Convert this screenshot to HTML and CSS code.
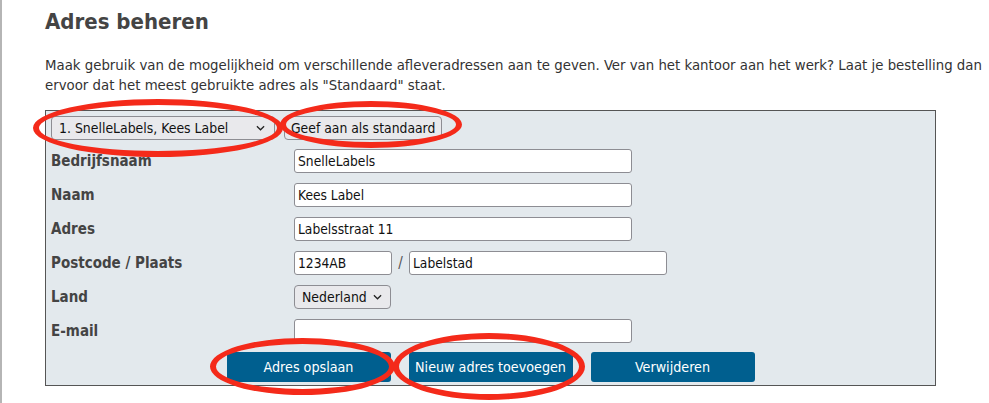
FILE: index.html
```html
<!DOCTYPE html>
<html lang="nl">

<head>
    <meta charset="UTF-8">
    <meta name="viewport" content="width=device-width, initial-scale=1.0">
    <title>Adres beheren</title>
    <link rel="stylesheet" href="styles.css">
</head>

<body>
    <div class="page">
        <h1 class="title">Adres beheren</h1>
        <p class="intro">Maak gebruik van de mogelijkheid om verschillende afleveradressen aan te geven. Ver van het kantoor aan het werk? Laat je bestelling dan ervoor dat het meest gebruikte adres als "Standaard" staat.</p>

        <div class="panel">
            <div class="panel-top">
                <div class="select select-address">
                    <span>1. SnelleLabels, Kees Label</span>
                    <svg class="chevron" viewBox="0 0 10 6" width="9" height="6"><path d="M1 1l4 4 4-4" fill="none" stroke="#222" stroke-width="1.4"/></svg>
                </div>
                <button class="btn-plain">Geef aan als standaard</button>
            </div>

            <div class="form">
                <label>Bedrijfsnaam</label>
                <div class="field"><input class="input" type="text" value="SnelleLabels"></div>

                <label>Naam</label>
                <div class="field"><input class="input" type="text" value="Kees Label"></div>

                <label>Adres</label>
                <div class="field"><input class="input" type="text" value="Labelsstraat 11"></div>

                <label>Postcode / Plaats</label>
                <div class="field">
                    <input class="input input-postcode" type="text" value="1234AB">
                    <span class="slash">/</span>
                    <input class="input input-city" type="text" value="Labelstad">
                </div>

                <label>Land</label>
                <div class="field">
                    <div class="select select-country">
                        <span>Nederland</span>
                        <svg class="chevron" viewBox="0 0 10 6" width="9" height="6"><path d="M1 1l4 4 4-4" fill="none" stroke="#222" stroke-width="1.4"/></svg>
                    </div>
                </div>

                <label>E-mail</label>
                <div class="field"><input class="input" type="text" value=""></div>
            </div>

            <div class="actions">
                <button class="btn">Adres opslaan</button>
                <button class="btn">Nieuw adres toevoegen</button>
                <button class="btn">Verwijderen</button>
            </div>
        </div>
    </div>

    <!-- rode markeringen -->
    <div class="mark mark-1"></div>
    <div class="mark mark-2"></div>
    <div class="mark mark-3"></div>
    <div class="mark mark-4"></div>
</body>

</html>
```

FILE: styles.css
```css
* {
    box-sizing: border-box;
}
body {
    margin: 0;
    background-color: #fff;
    font-family: "DejaVu Sans Condensed", "DejaVu Sans", Verdana, sans-serif;
    color: #444;
    position: relative;
    overflow: hidden;
}
.page {
    border-left: 2px solid #b5b5b5;
    padding-left: 43px;
    min-height: 403px;
}
.title {
    margin: 0;
    padding-top: 9px;
    font-size: 22px;
    line-height: 26px;
    color: #444;
}
.intro {
    margin: 0;
    padding-top: 20px;
    font-size: 14.8px;
    line-height: 20px;
    color: #333;
    width: 944px;
}
.panel {
    margin-top: 15px;
    width: 891px;
    background: #e3e9ed;
    border: 1px solid #555;
    padding: 5px 5px 3px 5px;
}
.panel-top {
    display: flex;
    gap: 9px;
    margin-bottom: 9px;
}
.select {
    display: flex;
    align-items: center;
    justify-content: space-between;
    height: 24px;
    padding: 0 9px 0 7px;
    background: #e9e9ec;
    border: 1px solid #8d8d93;
    border-radius: 4px;
    font-size: 13.9px;
    color: #111;
}
.select-address {
    width: 224px;
}
.select-country {
    width: 97px;
    padding-right: 8px;
}
.btn-plain {
    height: 24px;
    padding: 0 6px;
    background: #e9e9ec;
    border: 1px solid #8d8d93;
    border-radius: 4px;
    font-family: inherit;
    font-size: 13.8px;
    color: #111;
    white-space: nowrap;
}
.form {
    display: grid;
    grid-template-columns: 243px 1fr;
    row-gap: 10px;
    align-items: center;
}
.form label {
    font-weight: bold;
    font-size: 15px;
    color: #444;
}
.field {
    display: flex;
    align-items: center;
    height: 24px;
}
.input {
    width: 338px;
    height: 24px;
    padding: 0 3px;
    border: 1px solid #8d8d93;
    border-radius: 3px;
    background: #fff;
    font-family: inherit;
    font-size: 13.7px;
    color: #111;
}
.input-postcode {
    width: 98px;
}
.slash {
    width: 17px;
    text-align: center;
    font-size: 15px;
    color: #555;
}
.input-city {
    width: 258px;
}
.actions {
    display: flex;
    justify-content: center;
    gap: 18px;
    margin-top: 9px;
}
.btn {
    width: 164px;
    height: 30px;
    padding: 0;
    border: 0;
    border-radius: 3px;
    background: #005f8f;
    color: #fff;
    font-family: inherit;
    font-size: 14.2px;
    white-space: nowrap;
}
.mark {
    position: absolute;
    border: 6px solid #f42a1a;
    border-radius: 50%;
    pointer-events: none;
}
.mark-1 {
    left: 33px;
    top: 99px;
    width: 250px;
    height: 58px;
}
.mark-2 {
    left: 280px;
    top: 101px;
    width: 182px;
    height: 47px;
}
.mark-3 {
    left: 210px;
    top: 338px;
    width: 185px;
    height: 57px;
}
.mark-4 {
    left: 393px;
    top: 333px;
    width: 192px;
    height: 67px;
}
```
